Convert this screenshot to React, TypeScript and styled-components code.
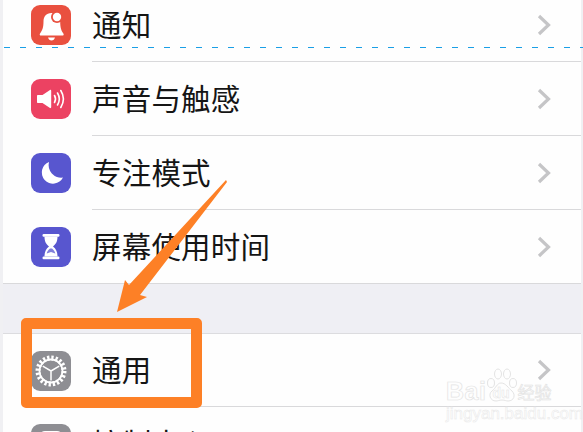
import React from "react";
import styled, { createGlobalStyle } from "styled-components";

const Global = createGlobalStyle`
  html, body { margin: 0; padding: 0; background: #f0f0f3; }
  body { font-family: "Noto Sans CJK SC", "Noto Sans", sans-serif; }
`;

const Page = styled.div`
  position: relative;
  width: 583px;
  height: 432px;
  overflow: hidden;
  box-sizing: border-box;
  padding: 0 2px 0 3px;
  background: #f0f0f3;
`;

const List = styled.div`
  display: flex;
  flex-direction: column;
  margin-top: -12px;
  background: #fefefe;
`;

const Row = styled.div<{ $h?: number }>`
  display: flex;
  align-items: center;
  height: ${(p) => p.$h ?? 74}px;
  flex: none;
  padding-left: 28px;
  background: #fefefe;
`;

const IconBox = styled.div<{ $bg: string }>`
  width: 40px;
  height: 40px;
  flex: none;
  border-radius: 9px;
  background: ${(p) => p.$bg};
  display: flex;
  svg { display: block; }
`;

const Body = styled.div<{ $last?: boolean }>`
  flex: 1;
  align-self: stretch;
  display: flex;
  align-items: center;
  margin-left: 21px;
  padding-right: 30px;
  border-bottom: ${(p) => (p.$last ? "none" : "1px solid #d9d9db")};
`;

const Label = styled.span`
  flex: 1;
  font-size: 29.5px;
  line-height: 40px;
  color: #151515;
  letter-spacing: 0.2px;
  position: relative;
  top: -2px;
`;

const Gap = styled.div`
  height: 51px;
  flex: none;
  box-sizing: border-box;
  margin-top: -1px;
  background: #efeff4;
  border-top: 1px solid #d9d9db;
  border-bottom: 1px solid #dcdcdf;
`;

const DashLine = styled.div`
  position: absolute;
  left: 4px;
  right: 0;
  top: 47px;
  height: 1px;
  background: repeating-linear-gradient(to right, #1a9fe6 0 6px, transparent 6px 16px);
`;

const Highlight = styled.div`
  position: absolute;
  left: 21px;
  top: 318px;
  width: 181px;
  height: 90px;
  box-sizing: border-box;
  border: 11px solid #fd8026;
  border-radius: 5px;
`;

const ArrowSvg = styled.svg`
  position: absolute;
  left: 100px;
  top: 170px;
`;

const Watermark = styled.div`
  position: absolute;
  left: 446px;
  top: 368px;
  width: 108px;
  color: transparent;
  -webkit-text-stroke: 0.7px #e4e4e4;
  font-family: "Liberation Sans", sans-serif;
`;

const MarkTop = styled.div`
  display: flex;
  align-items: flex-end;
  height: 36px;
`;

const MarkWord = styled.span`
  font-size: 25px;
  line-height: 26px;
  font-weight: 700;
  letter-spacing: 0.5px;
`;

const MarkPawBox = styled.div`
  position: relative;
  flex: none;
  width: 32px;
  height: 36px;
  margin-left: -1px;
  svg { display: block; }
`;

const MarkDu = styled.span`
  position: absolute;
  left: 7px;
  bottom: 3px;
  font-size: 14px;
  line-height: 16px;
  font-weight: 700;
  -webkit-text-stroke: 0.5px #e4e4e4;
`;

const MarkCn = styled.span`
  font-family: "Noto Sans CJK SC", sans-serif;
  font-size: 17px;
  line-height: 24px;
  white-space: nowrap;
`;

const MarkUrl = styled.div`
  margin-top: 2px;
  font-size: 17px;
  line-height: 16px;
  white-space: nowrap;
  -webkit-text-stroke: 0.5px #e8e8e8;
`;

const Chevron = () => (
  <svg width="14" height="22" viewBox="0 0 14 22" fill="none">
    <path d="M2 2 L11.5 11 L2 20" stroke="#c5c5c7" strokeWidth="3.2" />
  </svg>
);

const Bell = () => (
  <svg width="40" height="40" viewBox="0 0 40 40">
    <path d="M20.5 8c-5.500 0-8 3.800-8 8.500 0 6-1.200 9-3.600 12.200-.5.9 0 1.800 1 1.800h21.600c1 0 1.500-.9 1-1.800-2.200-3-3.300-6-3.300-12.200 0-4.700-3-8.500-8.700-8.500z" fill="#fff" />
    <path d="M17 32.500h7c-.6 2-1.800 3-3.500 3s-2.900-1-3.500-3z" fill="#fff" />
    <circle cx="26" cy="12" r="6" fill="#e9503f" />
    <circle cx="26" cy="12" r="4.200" fill="#fff" />
  </svg>
);

const Speaker = () => (
  <svg width="40" height="40" viewBox="0 0 40 40" fill="none">
    <path d="M7 16h4.500L19 11c.6-.4 1.200 0 1.200.7v16.600c0 .7-.6 1.100-1.200.7L11.500 24H7c-.6 0-1-.4-1-1v-6c0-.6.4-1 1-1z" fill="#fff" />
    <path d="M23.500 16.500c1.300 2.200 1.300 4.800 0 7" stroke="#fff" strokeWidth="1.600" strokeLinecap="round" />
    <path d="M26.500 14c2.300 3.800 2.300 8.200 0 12" stroke="#fff" strokeWidth="1.600" strokeLinecap="round" />
    <path d="M29.800 11.500c3.200 5.200 3.200 11.800 0 17" stroke="#fff" strokeWidth="1.600" strokeLinecap="round" />
  </svg>
);

const Moon = () => (
  <svg width="40" height="40" viewBox="0 0 40 40">
    <path d="M18 9 A11.200 11.200 0 1 0 32 24.500 A12.500 12.500 0 0 1 18 9 Z" fill="#fff" />
  </svg>
);

const Hourglass = () => (
  <svg width="40" height="40" viewBox="0 0 40 40" fill="none">
    <rect x="11.500" y="7" width="17" height="2.800" rx="1.200" fill="#fff" />
    <rect x="11.500" y="29.500" width="17" height="2.800" rx="1.200" fill="#fff" />
    <path d="M13.500 9.500h13c0 5-1.500 7.500-4.500 10 3 2.500 4.500 5 4.500 10h-13c0-5 1.500-7.500 4.500-10-3-2.500-4.500-5-4.500-10z" fill="#fff" />
    <path d="M19 21.500h2c2 1.500 3 3.200 3.300 5l-4.300-1.500-4.300 1.500c.3-1.800 1.300-3.500 3.300-5z" fill="#5856cf" opacity="0.75" />
  </svg>
);

const Gear = () => (
  <svg width="40" height="40" viewBox="0 0 40 40" fill="none">
    <circle cx="20" cy="20" r="13" stroke="#fff" strokeWidth="5" strokeDasharray="2.200 1.880" />
    <circle cx="20" cy="20" r="11.500" stroke="#fff" strokeWidth="1.800" />
    <path d="M20 20 L20 29.500 M20 20 L11.800 15.200 M20 20 L28.200 15.200" stroke="#fff" strokeWidth="1.500" />
  </svg>
);

const Control = () => (
  <svg width="40" height="40" viewBox="0 0 40 40" fill="none">
    <rect x="9" y="8" width="22" height="10" rx="5" stroke="#fff" strokeWidth="2" />
    <rect x="9" y="22" width="22" height="10" rx="5" stroke="#fff" strokeWidth="2" />
  </svg>
);

const rows = [
  { bg: "#e9503f", icon: <Bell />, text: "通知" },
  { bg: "#ec4262", icon: <Speaker />, text: "声音与触感" },
  { bg: "#5856cf", icon: <Moon />, text: "专注模式" },
  { bg: "#5856cf", icon: <Hourglass />, text: "屏幕使用时间", last: true },
];

export default function App() {
  return (
    <Page>
      <Global />
      <List>
        {rows.map((r) => (
          <Row key={r.text}>
            <IconBox $bg={r.bg}>{r.icon}</IconBox>
            <Body $last={r.last}>
              <Label>{r.text}</Label>
              <Chevron />
            </Body>
          </Row>
        ))}
        <Gap />
        <Row $h={73}>
          <IconBox $bg="#8e8e93"><Gear /></IconBox>
          <Body>
            <Label>通用</Label>
            <Chevron />
          </Body>
        </Row>
        <Row>
          <IconBox $bg="#8e8e93"><Control /></IconBox>
          <Body $last>
            <Label>控制中心</Label>
            <Chevron />
          </Body>
        </Row>
      </List>
      <DashLine />
      <ArrowSvg width="130" height="145" viewBox="0 0 130 145">
        <polygon points="126,10 127,12 40,125 47,127 17,142 25,110 29,115" fill="#fd8026" />
      </ArrowSvg>
      <Highlight />
      <Watermark>
        <MarkTop>
          <MarkWord>Bai</MarkWord>
          <MarkPawBox>
            <svg width="32" height="36" viewBox="0 0 32 36" fill="none" stroke="#e4e4e4" strokeWidth="1">
              <ellipse cx="6" cy="15" rx="3.500" ry="4.500" />
              <ellipse cx="13" cy="6" rx="3.500" ry="5" />
              <ellipse cx="22" cy="6" rx="3.500" ry="5" />
              <ellipse cx="28" cy="15" rx="3.500" ry="4.500" />
              <path d="M16 15c-4 0-5 5-9 8-4 3-2 10 4 10 2 0 3-1 6-1s4 1 6 1c6 0 8-6 4-10-4-3-6-8-11-8z" />
            </svg>
            <MarkDu>du</MarkDu>
          </MarkPawBox>
          <MarkCn>经验</MarkCn>
        </MarkTop>
        <MarkUrl>jingyan.baidu.com</MarkUrl>
      </Watermark>
    </Page>
  );
}
